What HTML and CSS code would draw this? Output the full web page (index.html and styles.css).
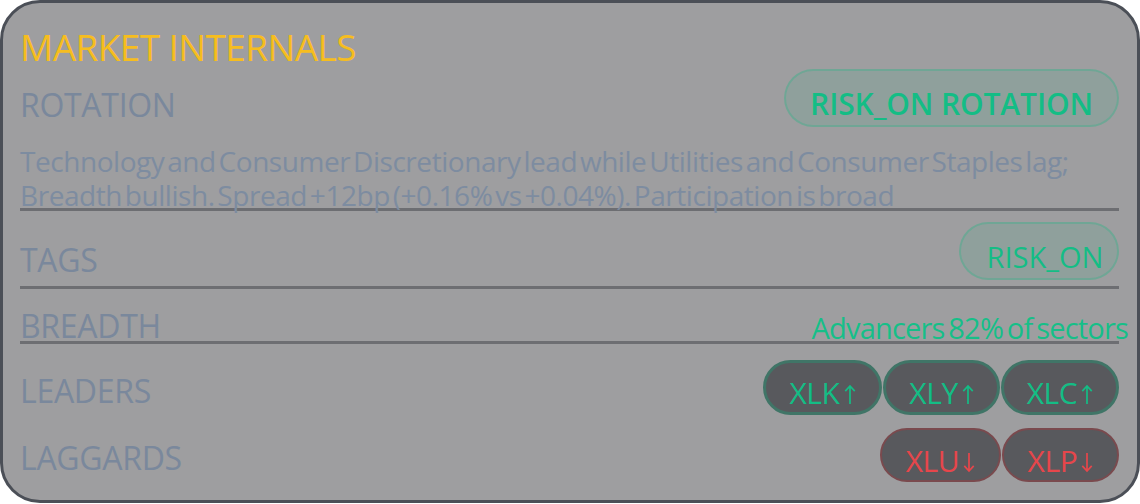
FILE: index.html
```html
<!DOCTYPE html>
<html>
<head>
<meta charset="utf-8">
<link rel="stylesheet" href="styles.css">
</head>
<body>
<div class="card">
  <div class="title">MARKET INTERNALS</div>
  <div class="row row-rotation">
    <div class="row-head">
      <span class="label">ROTATION</span>
      <span class="pill pill-regime">RISK_ON ROTATION</span>
    </div>
    <p class="desc">Technology and Consumer Discretionary lead while Utilities and Consumer Staples lag; Breadth bullish. Spread +12bp (+0.16% vs +0.04%). Participation is broad</p>
  </div>
  <div class="row row-tags">
    <span class="label">TAGS</span>
    <span class="pill pill-tag">RISK_ON</span>
  </div>
  <div class="row row-breadth">
    <span class="label">BREADTH</span>
    <span class="value">Advancers 82% of sectors</span>
  </div>
  <div class="row row-plain row-leaders">
    <span class="label">LEADERS</span>
    <div class="chips">
      <span class="chip chip-up w119">XLK<svg class="arrow" viewBox="0 0 14 24" aria-label="up"><path d="M7 23V2M1.5 8L7 2l5.5 6"/></svg></span>
      <span class="chip chip-up w117">XLY<svg class="arrow" viewBox="0 0 14 24" aria-label="up"><path d="M7 23V2M1.5 8L7 2l5.5 6"/></svg></span>
      <span class="chip chip-up w118">XLC<svg class="arrow" viewBox="0 0 14 24" aria-label="up"><path d="M7 23V2M1.5 8L7 2l5.5 6"/></svg></span>
    </div>
  </div>
  <div class="row row-plain row-laggards">
    <span class="label">LAGGARDS</span>
    <div class="chips">
      <span class="chip chip-down w121">XLU<svg class="arrow" viewBox="0 0 14 24" aria-label="down"><path d="M7 1v21M1.5 16L7 22l5.5-6"/></svg></span>
      <span class="chip chip-down w117">XLP<svg class="arrow" viewBox="0 0 14 24" aria-label="down"><path d="M7 1v21M1.5 16L7 22l5.5-6"/></svg></span>
    </div>
  </div>
</div>
</body>
</html>
```

FILE: styles.css
```css
html, body {
  margin: 0;
  padding: 0;
  background: #ffffff;
}
body {
  font-family: "Open Sans", "Liberation Sans", sans-serif;
}
.card {
  box-sizing: border-box;
  width: 1140px;
  height: 503px;
  background: #9e9ea0;
  border: 3px solid #4b4f57;
  border-radius: 40px;
  padding: 22px 18px 0 17px;
  display: flex;
  flex-direction: column;
}
.title {
  font-size: 37px;
  line-height: 44px;
  height: 44px;
  color: #f6bd1e;
  letter-spacing: -0.6px;
}
.label {
  font-size: 32px;
  line-height: normal;
  color: #7a889c;
  letter-spacing: -0.3px;
}
.row {
  display: flex;
  justify-content: space-between;
  align-items: flex-start;
  border-bottom: 3px solid #6d6e72;
}
.row-rotation {
  flex-direction: column;
  align-items: stretch;
}
.row-head {
  display: flex;
  justify-content: space-between;
  align-items: flex-start;
  height: 58px;
}
.row-head .label {
  margin-top: 14px;
}
.pill {
  box-sizing: border-box;
  height: 58px;
  border-radius: 29px;
  border: 2px solid rgba(16, 185, 129, 0.25);
  background: rgba(16, 185, 129, 0.1);
  color: #14bd85;
  display: flex;
  align-items: center;
  justify-content: center;
  padding-top: 10px;
  white-space: nowrap;
}
.pill-regime {
  width: 335px;
  font-size: 30px;
  font-weight: 600;
  letter-spacing: -0.1px;
}
.pill-tag {
  width: 160px;
  padding-left: 12px;
  font-size: 29px;
}
.desc {
  margin: 17px 0 0;
  height: 64px;
  font-size: 28px;
  line-height: 34px;
  color: #7d8ca0;
  word-spacing: -4px;
  letter-spacing: -0.45px;
}
.row-tags {
  height: 75px;
}
.row-tags .label { margin-top: 27px; }
.row-tags .pill { margin-top: 11px; }
.row-breadth {
  height: 52px;
}
.row-breadth .label { margin-top: 15px; }
.value {
  margin-top: 19px;
  margin-right: -9px;
  font-size: 29px;
  line-height: normal;
  color: #16bf88;
  letter-spacing: -0.8px;
  word-spacing: -3px;
  white-space: nowrap;
}
.row-plain {
  border-bottom: none;
}
.row-leaders .label { margin-top: 25px; }
.row-leaders .chips { margin-top: 16px; }
.row-laggards .label { margin-top: 21px; }
.row-laggards .chips { margin-top: 13px; }
.chips {
  display: flex;
  gap: 1px;
}
.chip {
  box-sizing: border-box;
  height: 55px;
  border-radius: 28px;
  background: #58595d;
  display: flex;
  align-items: center;
  justify-content: center;
  padding-top: 10px;
  font-size: 30px;
  letter-spacing: -0.4px;
}
.arrow {
  width: 12px;
  height: 21px;
  margin-left: 4px;
  margin-top: 4px;
  fill: none;
  stroke: currentColor;
  stroke-width: 2;
  stroke-linecap: butt;
  stroke-linejoin: miter;
}
.chip-up {
  border: 3px solid #407567;
  color: #14bd85;
}
.chip-down {
  height: 54px;
  border: 2px solid #7a4a4e;
  color: #e6464b;
}
.w117 { width: 117px; }
.w118 { width: 118px; }
.w119 { width: 119px; }
.w121 { width: 121px; }
```
